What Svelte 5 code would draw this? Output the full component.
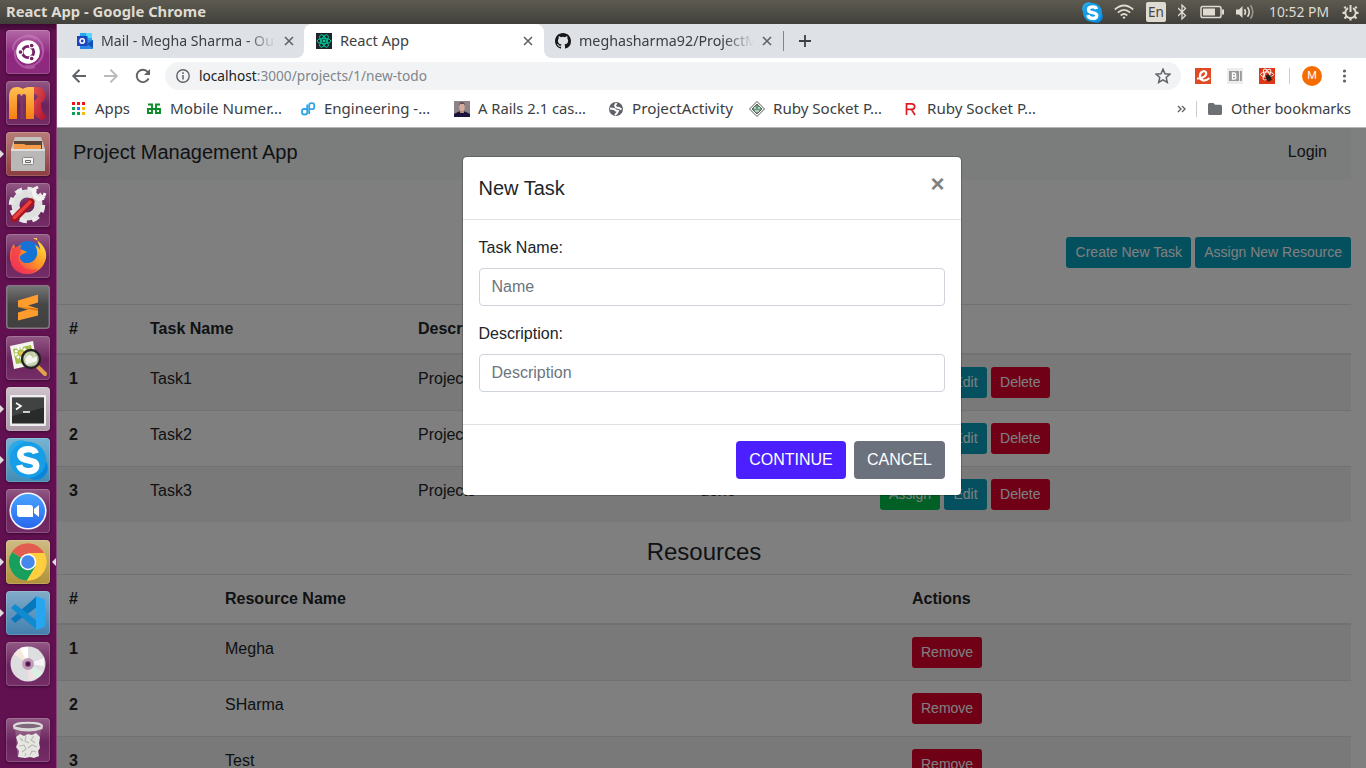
<script>
  const tasks = [
    { id: 1, name: 'Task1', description: 'Project1', status: 'done' },
    { id: 2, name: 'Task2', description: 'Project2', status: 'done' },
    { id: 3, name: 'Task3', description: 'Projects', status: 'done' }
  ];
  const resources = [
    { id: 1, name: 'Megha' },
    { id: 2, name: 'SHarma' },
    { id: 3, name: 'Test' }
  ];
  const bookmarks = [
    { icon: 'apps', text: 'Apps', w: 35 },
    { icon: 'geeks', text: 'Mobile Numer…', w: 112 },
    { icon: 'eng', text: 'Engineering -…', w: 106 },
    { icon: 'photo', text: 'A Rails 2.1 cas…', w: 108 },
    { icon: 'globe', text: 'ProjectActivity', w: 101 },
    { icon: 'gem', text: 'Ruby Socket P…', w: 109 },
    { icon: 'r', text: 'Ruby Socket P…', w: 109 }
  ];
  const launchers = [
    { icon: 'dash' }, { icon: 'rubymine' }, { icon: 'files', run: true }, { icon: 'settings' },
    { icon: 'firefox' }, { icon: 'sublime' }, { icon: 'viewer' }, { icon: 'terminal', run: true },
    { icon: 'skype', run: true }, { icon: 'zoom' }, { icon: 'chrome', run: true, active: true },
    { icon: 'vscode', run: true }, { icon: 'disc' }, { icon: 'trash' }
  ];
</script>

{#snippet label(text, w, color = '#3c4043', weight = 400)}
  <svg class="label" width={w} height="20"><text x="0" y="15" textLength={w} lengthAdjust="spacingAndGlyphs" fill={color} font-weight={weight}>{text}</text></svg>
{/snippet}

{#snippet skype(size)}
  <svg width={size} height={size} viewBox="0 0 40 40">
    <circle cx="13.500" cy="13.500" r="11.500" fill="#29a9ea" /><circle cx="27" cy="27" r="11" fill="#0b84dc" /><circle cx="20" cy="20" r="16.500" fill="#169ee6" />
    <path d="M27 14C25.500 8.500 13 9 13 15c0 7.500 14.500 3 14.500 10.200 0 7-14 6.500-15.500-.5" fill="none" stroke="#fff" stroke-width="5.800" stroke-linecap="butt" />
  </svg>
{/snippet}

{#snippet cross()}
  <svg width="10" height="10" viewBox="0 0 10 10"><path d="M1 1l8 8M9 1l-8 8" stroke="#5f6368" stroke-width="1.600" /></svg>
{/snippet}

<div class="screen">
  <header class="panel">
    <div class="title">{@render label('React App - Google Chrome', 200, '#dfdbd2', 700)}</div>
    <div class="tray-skype">{@render skype(23)}</div>
    <svg width="20" height="16" viewBox="0 0 20 16" fill="none" stroke="#dfdbd2" stroke-width="1.700"><path d="M.8 5.500Q10-2.500 19.200 5.500M3.800 8.600Q10 3 16.200 8.600M6.700 11.500Q10 8.500 13.300 11.500" /><circle cx="10" cy="13.600" r="1.200" fill="#dfdbd2" stroke="none" /></svg>
    <span class="lang">En</span>
    <svg width="10" height="18" viewBox="0 0 10 18" fill="none" stroke="#dfdbd2" stroke-width="1.300"><path d="M0 5l7.500 7.500L4 16V2l3.500 3.500L0 13" /></svg>
    <svg width="24" height="14" viewBox="0 0 24 14"><rect x="1" y="1.500" width="20" height="11" rx="1.800" fill="none" stroke="#dfdbd2" stroke-width="1.500" /><path d="M3 3.500h12v7H3zM22 4.500h2v5h-2z" fill="#dfdbd2" /></svg>
    <svg width="20" height="16" viewBox="0 0 20 16"><path d="M0 5.500h3l3.500-3.500v12L3 10.500H0z" fill="#dfdbd2" /><path d="M8.500 5.200q2 2.800 0 5.600M11.500 3.200q3.600 4.800 0 9.600" fill="none" stroke="#dfdbd2" stroke-width="1.600" /><path d="M14.500 1.200q4.600 6.800 0 13.600" fill="none" stroke="#99968c" stroke-width="1.600" /></svg>
    {@render label('10:52 PM', 60, '#dfdbd2')}
    <svg width="17" height="17" viewBox="0 0 17 17" fill="none" stroke="#dfdbd2"><path d="M6 4.200a5.200 5.200 0 1 0 5 0" stroke-width="1.900" /><path d="M8.500 1v7" stroke-width="2" /><path d="M3.800 4.200L2.300 2.700M13.200 4.200l1.500-1.500M3 8.800H.5M14 8.800h2.500M4.500 12.500l-2 2M12.500 12.500l2 2M8.500 14v2.500" stroke-width="2.200" /></svg>
  </header>

  <div class="desktop">
    <nav class="launcher">
      {#each launchers as item}
        <div class="tile {item.icon}">
          {#if item.run}<i class="run"></i>{/if}
          {#if item.active}<i class="run active"></i>{/if}
          {#if item.icon === 'skype'}
            {@render skype(44)}
          {:else}
            <svg width="44" height="44" viewBox="0 0 44 44">
              {#if item.icon === 'dash'}
                <path d="M7 20C7 9 19 3 30 9M17 7c11-5 22 5 20 17M36 17c4 11-6 21-17 19M29 37C18 41 7 32 9 20" fill="none" stroke="#d28bc5" stroke-width="2" opacity=".45" />
                <circle cx="22" cy="22" r="11.800" fill="#fff" /><circle cx="22" cy="22" r="5.700" fill="none" stroke="#772065" stroke-width="2.800" />
                <g fill="#772065" stroke="#fff" stroke-width="1.100"><circle cx="14.500" cy="22" r="2.400" /><circle cx="25.700" cy="15.500" r="2.400" /><circle cx="25.700" cy="28.500" r="2.400" /></g>
              {:else if item.icon === 'rubymine'}
                <defs><linearGradient id="mg" x2="0" y2="1"><stop stop-color="#ffbf54" /><stop offset="1" stop-color="#f57f10" /></linearGradient><linearGradient id="rg" x2="1" y2="1"><stop stop-color="#e0564f" /><stop offset="1" stop-color="#b20f30" /></linearGradient></defs>
                <path d="M28 6h4c9 1 9 13 3 16 0 7 2 11 6 14l-5 3c-7-2-10-9-11-17l5-4c3-2 1-5-2-5z" fill="url(#rg)" />
                <path d="M3 38V16C3 9 6 6 11 6c3 0 5 1 6 2 1-1 3-2 6-2h5v32h-8V15q0-2-2-2t-2 2v23h-1V15q0-2-2-2t-2 2v23z" fill="url(#mg)" />
                <path d="M14 16q1.500-2.500 3.500 0v22h2V16h-1v22h-4z" fill="#7c3866" />
              {:else if item.icon === 'files'}
                <path d="M9 5h26l4 12H5z" fill="#c4c3c0" /><path d="M8 9h28v9H8z" fill="#5c4534" /><path d="M8 12h10l2 1h15v6H8z" fill="#f49a49" /><path d="M5 17h34v22H5z" fill="#b9b8b6" /><path d="M5 17h34v2H5z" fill="#ddd" /><rect x="16.500" y="25.500" width="11" height="7" rx="1" fill="#f4f4f2" stroke="#888" /><path d="M19.500 28.500h5v2h-5z" fill="none" stroke="#666" />
              {:else if item.icon === 'settings'}
                <circle cx="21" cy="22" r="11.500" fill="none" stroke="#dfdfdf" stroke-width="8" /><circle cx="21" cy="22" r="16" fill="none" stroke="#e9e9e9" stroke-width="4.500" stroke-dasharray="7.200 5.366" />
                <path d="M30 14l-5 5" stroke="#c6c6c6" stroke-width="5" /><path d="M8.500 35.500L25 19" stroke="#a9131b" stroke-width="7" stroke-linecap="round" /><path d="M8.500 34.500L24 19" stroke="#e8403f" stroke-width="3.500" stroke-linecap="round" /><path d="M29 6q-2 4 0 8 5 4 9-1" fill="none" stroke="#f3f3f3" stroke-width="4" /><path d="M28 6l4-2M38 13l1-3" stroke="#f3f3f3" stroke-width="3" />
              {:else if item.icon === 'firefox'}
                <defs><linearGradient id="fx" x1="1" x2="0" y2="1"><stop stop-color="#fff34c" /><stop offset=".45" stop-color="#ff9824" /><stop offset="1" stop-color="#e91e63" /></linearGradient></defs>
                <circle cx="22" cy="20" r="13" fill="#1473d5" /><path d="M27 4c10 5 14 12 13 20-2 10-10 16-19 16S3 32 4 22c0-5 1-8 4-12l1 4 6-3-1 4 7 3-6 3c-3 3 1 9 7 8 8-1 12-9 7-18 3 1 4 3 5 5 0-5-3-8-3-12z" fill="url(#fx)" /><path d="M6 14l-1 17q4 8 14 9 8 0 13-5-13 3-18-6-3-6 1-11l-1-6z" fill="#f33450" opacity=".7" />
              {:else if item.icon === 'sublime'}
                <path d="M12 15.500l20-6v8l-10 3 10 3v7l-20 5v-8l10-3-10-2.500z" fill="#ff9c2e" /><path d="M12 22l20 1.500v2.500l-10-2z" fill="#d97812" />
              {:else if item.icon === 'viewer'}
                <path d="M4 10l23-5 4 23-23 5z" fill="#f4f4ef" /><path d="M7 13l18-4 3 16-18 3z" fill="#a2bd48" /><circle cx="15" cy="17" r="5" fill="none" stroke="#fff" stroke-width="3" stroke-dasharray="2.200 1" /><circle cx="15" cy="17" r="2" fill="#efc240" /><path d="M31 30l8 8" stroke="#e0a349" stroke-width="4" stroke-linecap="round" /><circle cx="25" cy="23" r="9" fill="#c4cfae" opacity=".85" /><path d="M19 24q4-9 8-2l4-2v5l-10 3z" fill="#fff" opacity=".8" /><circle cx="25" cy="23" r="9" fill="none" stroke="#222" stroke-width="2.400" />
              {:else if item.icon === 'terminal'}
                <rect x="4" y="8" width="36" height="31" rx="1" fill="#eee" /><rect x="6" y="10.500" width="32" height="26" fill="#292b2b" /><path d="M6 10.500h32v10L6 29z" fill="#555757" opacity=".55" /><path d="M10 16l5 3-5 3.500M17 25h7" fill="none" stroke="#fff" stroke-width="1.600" />
              {:else if item.icon === 'zoom'}
                <defs><linearGradient id="zm" x2="0" y2="1"><stop stop-color="#4ba5ff" /><stop offset="1" stop-color="#2765ed" /></linearGradient></defs>
                <circle cx="22" cy="22" r="17.800" fill="url(#zm)" stroke="#f6f6ff" stroke-width="1.600" /><path d="M11 16h13q3 0 3 3v9H14q-3 0-3-3zM28 20l5-4v12l-5-4z" fill="#fff" />
              {:else if item.icon === 'chrome'}
                <circle cx="22" cy="22" r="18.500" fill="#ffcf40" /><path d="M22 22L6 12A18.500 18.500 0 0 1 38 13H22z" fill="#e25c4f" /><path d="M22 22L6 12a18.500 18.500 0 0 0 15 28.500L29 27z" fill="#17a05d" /><path d="M22 13h16a18.500 18.500 0 0 1-17 27.500L30 26z" fill="#ffcf40" /><circle cx="22" cy="22" r="8.300" fill="#fff" /><circle cx="22" cy="22" r="6.800" fill="#4788ee" />
              {:else if item.icon === 'vscode'}
                <path d="M5 28l4 4 22-16V5z" fill="#0878bc" /><path d="M5 17l4-4 22 17v9z" fill="#118bd0" /><path d="M30 5l9 3.500v27L30 39z" fill="#27a5ef" />
              {:else if item.icon === 'disc'}
                <circle cx="22" cy="22" r="17.500" fill="#dedee0" /><path d="M22 22L8 12a17 17 0 0 1 9-6z" fill="#f3eadd" /><path d="M22 22L14 6a17 17 0 0 1 8-1z" fill="#fff" /><path d="M22 22l15 8a17 17 0 0 1-8 7z" fill="#dcefe3" /><path d="M22 22l16-6v8z" fill="#f5f5f5" /><path d="M22 22l7 15-6 2z" fill="#f5dfe2" /><circle cx="22" cy="22" r="6" fill="#bf9dba" /><circle cx="22" cy="22" r="2.700" fill="#551047" stroke="#906088" />
              {:else}
                <path d="M9 9l2.500 30h21L35 9z" fill="#b79ab0" opacity=".35" /><path d="M10 19l4-3 4 2 4-2 4 1 4-2 4 4-1 6 1 5-2 3 1 5-5 2-4-1-5 1-7-1 1-6-3-4 2-4z" fill="#e6e6e2" /><path d="M14 20l3 3M20 18l-1 5 4 2M28 18l-3 4 4 3M13 28l5-1 2 4-4 3M22 30l4-3 5 2M24 37l2-4 4 1M19 38l1-3" fill="none" stroke="#b9b9b4" stroke-width="1.100" /><ellipse cx="22" cy="8" rx="14" ry="3.300" fill="#7f6679" stroke="#ddd" stroke-width="2" /><path d="M7.500 9q14 6 29 0v2q-14 5-29 0z" fill="#d8d8d5" />
              {/if}
            </svg>
          {/if}
        </div>
      {/each}
    </nav>

    <section class="browser">
      <div class="tabs">
        <div class="tab first">
          <svg width="16" height="16" viewBox="0 0 16 16"><path d="M3 0h12v9H3z" fill="#28a8ea" /><path d="M9 0h6v5H9z" fill="#50d9ff" /><path d="M3 7h13v9H3z" fill="#2b86e4" /><path d="M10 11l6-4v8z" fill="#174fae" /><rect y="3" width="10.500" height="10" fill="#1c45c2" /><circle cx="5.200" cy="8" r="2.200" fill="none" stroke="#fff" stroke-width="1.500" /></svg>
          <div class="fade">{@render label('Mail - Megha Sharma - Out', 178)}</div>
          {@render cross()}
        </div>
        <div class="tab current">
          <svg width="16" height="16" viewBox="0 0 16 16"><path d="M0 0h16v16H0z" fill="#20232a" /><g fill="none" stroke="#00c896" stroke-width="1"><ellipse cx="8" cy="8" rx="6.800" ry="2.700" /><ellipse cx="8" cy="8" rx="6.800" ry="2.700" transform="rotate(60 8 8)" /><ellipse cx="8" cy="8" rx="6.800" ry="2.700" transform="rotate(120 8 8)" /></g><circle cx="8" cy="8" r="1.400" fill="#00d8a0" /></svg>
          <div>{@render label('React App', 69)}</div>
          {@render cross()}
        </div>
        <div class="tab third">
          <svg width="16" height="16" viewBox="0 0 16 16"><path fill="#181717" d="M8 0C3.580 0 0 3.580 0 8c0 3.540 2.290 6.530 5.470 7.590.4.070.55-.17.55-.38 0-.19-.01-.82-.01-1.490-2.010.37-2.530-.49-2.690-.94-.09-.23-.48-.94-.82-1.130-.28-.15-.68-.52-.01-.53.63-.01 1.080.58 1.230.82.72 1.210 1.870.87 2.330.66.070-.52.28-.87.51-1.070-1.780-.2-3.640-.89-3.640-3.950 0-.87.31-1.590.82-2.150-.08-.2-.36-1.020.08-2.120 0 0 .67-.21 2.200.82a7.600 7.600 0 0 1 4 0c1.530-1.040 2.200-.82 2.200-.82.44 1.100.16 1.920.08 2.120.51.56.82 1.270.82 2.150 0 3.070-1.870 3.750-3.650 3.950.29.25.54.73.54 1.480 0 1.070-.01 1.930-.01 2.200 0 .21.15.46.55.38A8 8 0 0 0 16 8c0-4.420-3.580-8-8-8z" /></svg>
          <div class="fade">{@render label('meghasharma92/ProjectM', 179)}</div>
          {@render cross()}
        </div>
        <div class="newtab"><svg width="12" height="12" viewBox="0 0 12 12"><path d="M6 0v12M0 6h12" stroke="#3c4043" stroke-width="1.800" /></svg></div>
      </div>

      <div class="toolbar">
        <svg width="16" height="16" viewBox="0 0 16 16"><path d="M15 8H2.500M8.500 1.800L2.200 8l6.300 6.200" fill="none" stroke="#5f6368" stroke-width="1.900" /></svg>
        <svg width="16" height="16" viewBox="0 0 16 16"><path d="M1 8h12.500M7.500 1.800L13.800 8l-6.300 6.200" fill="none" stroke="#b9bbbd" stroke-width="1.900" /></svg>
        <svg width="16" height="16" viewBox="0 0 16 16"><path d="M13.600 10.500A6.200 6.200 0 1 1 12.800 4" fill="none" stroke="#5f6368" stroke-width="1.900" /><path d="M15 1v6H9z" fill="#5f6368" /></svg>
        <div class="omnibox">
          <svg width="14" height="14" viewBox="0 0 14 14"><circle cx="7" cy="7" r="6.200" fill="none" stroke="#5f6368" stroke-width="1.400" /><path d="M7 6v4.500M7 3.300v1.600" stroke="#5f6368" stroke-width="1.500" /></svg>
          <svg class="label url" width="228" height="20"><text x="0" y="15" textLength="228" lengthAdjust="spacingAndGlyphs" fill="#80868b"><tspan fill="#202124">localhost</tspan>:3000/projects/1/new-todo</text></svg>
          <svg class="star" width="16" height="16" viewBox="0 0 14 14"><path d="M7 1l1.700 4 4.400.4-3.300 2.900 1 4.300L7 10.300l-3.800 2.300 1-4.300L.9 5.400 5.300 5z" fill="none" stroke="#5f6368" stroke-width="1.300" /></svg>
        </div>
        <svg width="16" height="16" viewBox="0 0 16 16"><path d="M0 0h16v16H0z" fill="#df4a24" /><path d="M2 10.500h2C9 10 12 7 11 4.500S5 3 5 8s5 6 9.500 2" fill="none" stroke="#fff" stroke-width="2.200" /></svg>
        <svg width="16" height="16" viewBox="0 0 16 16"><path d="M0 0h16v16H0z" fill="#ededed" /><path d="M2 3h10v10H2zM13 3h1.800v10H13z" fill="#9a9a9a" /><path d="M5.500 5v6h2q1.500 0 1.500-1.500T7.500 8H6h1.300q1.400 0 1.400-1.500T7.300 5z" fill="none" stroke="#fff" stroke-width="1.300" /></svg>
        <svg width="16" height="16" viewBox="0 0 16 16"><path d="M0 0h16v16H0z" fill="#dd3918" /><g fill="none" stroke="#fff" stroke-width=".9"><ellipse cx="8" cy="6.500" rx="6.500" ry="2.500" /><ellipse cx="8" cy="6.500" rx="6" ry="2.500" transform="rotate(60 8 6.500)" /><ellipse cx="8" cy="6.500" rx="6" ry="2.500" transform="rotate(120 8 6.500)" /></g><ellipse cx="9.500" cy="10" rx="2.500" ry="3.500" fill="#2a1b16" transform="rotate(-30 9.500 10)" /><path d="M6 8l7 4M5.500 11l8-2M8 14l4-7" stroke="#2a1b16" stroke-width=".7" /></svg>
        <i class="sep"></i>
        <span class="avatar">M</span>
        <svg width="14" height="16" viewBox="0 0 14 16" fill="#5f6368"><circle cx="6.500" cy="3" r="1.600" /><circle cx="6.500" cy="8" r="1.600" /><circle cx="6.500" cy="13" r="1.600" /></svg>
      </div>

      <div class="bookmarks">
        {#each bookmarks as b}
          <div class="bookmark">
            <svg width="16" height="16" viewBox="0 0 16 16">
              {#if b.icon === 'apps'}
                <path d="M1 1h3v3H1zM6 1h3v3H6zM11 1h3v3h-3z" fill="#f01414" /><path d="M1 6h3v3H1zM1 11h3v3H1zM6 11h3v3H6z" fill="#0fa055" /><path d="M6 6h3v3H6z" fill="#3b68f7" /><path d="M11 6h3v3h-3zM11 11h3v3h-3z" fill="#f7b916" />
              {:else if b.icon === 'geeks'}
                <path d="M2 3.500h4v8.500H2V8h12v4h-4V3.500h4" fill="none" stroke="#0b8c27" stroke-width="1.900" />
              {:else if b.icon === 'eng'}
                <path d="M7.200 3.500v8q0 2-2.200 2H4q-2 0-2-2v-1.500q0-2 2-2h3M9.200 13V4.200q0-2 2-2h1q2 0 2 2v2q0 2-2 2h-3" fill="none" stroke="#33a5e8" stroke-width="1.800" />
              {:else if b.icon === 'photo'}
                <path d="M0 0h16v16H0z" fill="#8d8488" /><path d="M0 16v-3l5-2.500h6l5 2.500v3z" fill="#17133a" /><path d="M6 8h4v4H6z" fill="#b58b7e" /><ellipse cx="8" cy="6" rx="2.800" ry="4" fill="#d4ab9c" /><path d="M5 5q0-4 3-4t3 4l-1-2H6z" fill="#65504a" />
              {:else if b.icon === 'globe'}
                <circle cx="8" cy="8" r="7" fill="#5f6368" /><path d="M8.500 2L7 4.500l1 2 3 .5 2.500 1.500M2 7.500l4 .5 2 1.500 2 .5-1 2-2 2" fill="none" stroke="#fff" stroke-width="1.900" />
              {:else if b.icon === 'gem'}
                <path d="M8 .5L15.500 8 8 15.500.5 8z" fill="#fff" stroke="#555" /><path d="M8 3l5 5-5 5-5-5z" fill="#649b7b" stroke="#444" stroke-width=".8" /><path d="M5 7h2M9 7h2M6 10h4" stroke="#fff" stroke-width="1.200" />
              {:else}
                <path d="M3.500 14V2.800h5q3.200 0 3.200 2.800t-3.200 2.800h-5M8.500 8.500l3.500 5.500" fill="none" stroke="#df1b22" stroke-width="1.700" />
              {/if}
            </svg>
            {@render label(b.text, b.w)}
          </div>
        {/each}
        <svg width="10" height="10" viewBox="0 0 10 10"><path d="M1 2l3 3-3 3M5 2l3 3-3 3" fill="none" stroke="#5f6368" stroke-width="1.400" /></svg>
        <i class="sep"></i>
        <div class="bookmark">
          <svg width="16" height="16" viewBox="0 0 16 16"><path d="M1 3.500q0-1.500 1.500-1.500h4L8 3.700h5.500q1.500 0 1.500 1.500v7.300q0 1.500-1.500 1.500h-11Q1 14 1 12.500z" fill="#6d7175" /></svg>
          {@render label('Other bookmarks', 120)}
        </div>
      </div>

      <main class="viewport">
        <div class="page">
          <div class="navbar"><span class="brand">Project Management App</span><span>Login</span></div>
          <div class="actions"><button class="btn info create">Create New Task</button><button class="btn info">Assign New Resource</button></div>

          <div class="table tasks">
            <div class="row head"><b>#</b><b>Task Name</b><b>Description</b><b>Status</b><b></b></div>
            {#each tasks as t}
              <div class="row">
                <b>{t.id}</b><span>{t.name}</span><span>{t.description}</span><span>{t.status}</span>
                <span class="buttons"><button class="btn success">Assign</button><button class="btn info edit">Edit</button><button class="btn danger">Delete</button></span>
              </div>
            {/each}
          </div>

          <h4>Resources</h4>
          <div class="table resources">
            <div class="row head"><b>#</b><b>Resource Name</b><b>Actions</b></div>
            {#each resources as r}
              <div class="row"><b>{r.id}</b><span>{r.name}</span><span class="buttons"><button class="btn danger">Remove</button></span></div>
            {/each}
          </div>
        </div>

        <div class="backdrop">
          <div class="modal">
            <div class="modal-header"><h5>New Task</h5><span class="close">×</span></div>
            <div class="modal-body">
              <label for="name">Task Name:</label>
              <input id="name" placeholder="Name" />
              <label for="description">Description:</label>
              <input id="description" placeholder="Description" />
            </div>
            <div class="modal-footer"><button class="continue">CONTINUE</button><button class="cancel">CANCEL</button></div>
          </div>
        </div>
      </main>
    </section>
  </div>
</div>

<style>
  :global(body) { margin: 0; overflow: hidden; }
  * { box-sizing: border-box; }
  svg { display: block; flex: none; }
  button { border: 1px solid transparent; margin: 0; font-family: inherit; }
  .screen { width: 1366px; height: 768px; display: flex; flex-direction: column; overflow: hidden; font-family: "Liberation Sans", Arial, sans-serif; }
  .label { font-family: "Noto Sans", "Open Sans", sans-serif; font-size: 14.5px; overflow: visible; }

  .panel { height: 24px; flex: none; display: grid; grid-template-columns: 1fr 32px 32px 32px 22px 36px 33px 73px 24px; align-items: center; background: linear-gradient(#5d5b50, #403f3a); }
  .title { padding-left: 6px; }
  .tray-skype { margin-left: -1px; }
  .lang { width: 20px; height: 20px; border-radius: 2px; background: #dfdbd2; color: #46443e; font: 13.5px/20px "Noto Sans", sans-serif; text-align: center; }

  .desktop { display: flex; flex: 1; min-height: 0; }
  .launcher { width: 57px; flex: none; padding: 6px 0 0 6px; display: flex; flex-direction: column; gap: 7px; background: linear-gradient(#3c0831, #611050 8px); border-right: 1px solid #87477a; }
  .tile { position: relative; width: 44px; height: 44px; flex: none; border-radius: 4px; display: flex; align-items: center; justify-content: center; background: linear-gradient(#925985, #6a235d 55%, #752d67); box-shadow: inset 0 0 0 1px rgba(255,255,255,.17), 0 1px 3px rgba(0,0,0,.4); }
  .tile.dash { background: linear-gradient(#b36aa6, #8f2781 55%, #8c2b7c); }
  .tile.files { background: linear-gradient(#b77d79, #8c3c3f); }
  .tile.sublime { background: linear-gradient(#777, #464646 45%, #404040); box-shadow: inset 0 0 0 1.5px #877784; }
  .tile.terminal { background: linear-gradient(#cec2cb, #aa9ba6); }
  .tile.skype { background: linear-gradient(#78b4d3, #438cb4); }
  .tile.chrome { background: linear-gradient(#cfbb84, #b19239); }
  .tile.vscode { background: linear-gradient(#83abc9, #427fae); }
  .tile.trash { margin-top: 25px; }
  .run { position: absolute; left: -6px; top: 18px; border: 4px solid transparent; border-left-color: #e1dce0; border-right: 0; }
  .run.active { left: 46px; border: 4px solid transparent; border-right-color: #e1dce0; border-left: 0; }

  .browser { flex: 1; min-width: 0; display: flex; flex-direction: column; background: #fff; }
  .tabs { height: 34px; flex: none; display: grid; grid-template-columns: 247px 240px 239px 1fr; background: linear-gradient(#dee1e6 50%, #fff 50%); }
  .tab { display: grid; grid-template-columns: 24px 1fr 10px; align-items: center; background: #dee1e6; }
  .first { padding: 0 10px 0 20px; border-bottom-right-radius: 8px; }
  .current { padding: 0 11px 0 12px; background: #fff; border-radius: 8px 8px 0 0; }
  .third { padding: 0 11px 0 11px; border-bottom-left-radius: 8px; }
  .fade { width: 175px; overflow: hidden; mask-image: linear-gradient(90deg, #000 145px, transparent 175px); }
  .newtab { display: flex; align-items: center; padding-left: 16px; background: linear-gradient(#80858b, #80858b) 0 50% / 1px 20px no-repeat #dee1e6; }
  .toolbar { height: 36px; flex: none; display: grid; grid-template-columns: 32px 32px 30px 1030px 32px 32px 30px 13px 36px 1fr; align-items: center; padding-left: 14px; }
  .omnibox { width: 1016px; height: 28px; border-radius: 14px; background: #f1f3f4; display: grid; grid-template-columns: 23px 1fr 26px; align-items: center; padding-left: 11px; }
  .sep { width: 1px; height: 16px; background: #c9cbce; }
  .avatar { width: 20px; height: 20px; border-radius: 50%; background: #f56c00; color: #fff; font: 11px/20px Roboto, sans-serif; text-align: center; }
  .bookmarks { height: 34px; flex: none; display: grid; grid-template-columns: 75px 154px 154px 154px 141px 154px 274px 19px 11px 1fr; align-items: center; padding: 0 0 4px 14px; border-bottom: 1px solid #b5b6b7; }
  .bookmark { display: flex; gap: 8px; align-items: center; }

  .viewport { position: relative; flex: 1; min-height: 0; overflow: hidden; color: #212529; font-size: 16px; line-height: 24px; }
  .page { width: 1294px; }
  .navbar { height: 52px; padding: 0 24px 4px 16px; display: flex; justify-content: space-between; align-items: center; background: #f6fafa; }
  .brand { font-size: 20px; }
  .actions { display: flex; justify-content: flex-end; gap: 4px; padding: 57px 0 36px; }
  .btn { height: 31px; padding: 0 8px; border-radius: 3px; color: #fff; font-size: 14px; line-height: 21px; }
  .create { width: 125px; }
  .edit { width: 43px; }
  .info { background: #0aa0be; }
  .success { background: #00c04c; }
  .danger { background: #e0002c; }
  .row { display: grid; align-items: start; height: 56px; border-top: 1px solid #dee2e6; }
  .row > * { padding: 12px 12px 0; }
  .tasks .row { grid-template-columns: 81px 268px 282px 180px 1fr; }
  .resources .row { grid-template-columns: 156px 687px 1fr; }
  .row.head { height: 51px; border-bottom: 2px solid #dee2e6; }
  .row:nth-child(even) { background: #f2f2f2; }
  .row.head + .row { height: 55px; border-top: 0; }
  .buttons { display: flex; gap: 4px; }
  h4 { margin: 0; height: 52px; padding-top: 15px; text-align: center; font-size: 24px; line-height: 29px; font-weight: 400; }

  .backdrop { position: absolute; inset: 0; background: rgba(0,0,0,.5); }
  .modal { width: 500px; margin: 28px 0 0 405px; background: #fff; background-clip: padding-box; border: 1px solid rgba(0,0,0,.2); border-radius: 5px; }
  .modal-header { height: 63px; padding: 16px 16.5px 16px 15.5px; display: flex; justify-content: space-between; border-bottom: 1px solid #dee2e6; }
  h5 { margin: 0; font-size: 20px; line-height: 30px; font-weight: 400; }
  .close { font-size: 24px; line-height: 22px; font-weight: 700; color: #808080; }
  .modal-body { padding: 16px; }
  .modal-body label { display: block; margin: 0 0 8px -.5px; }
  input { display: block; width: 100%; height: 38px; margin-bottom: 16px; padding: 6px 11.5px; border: 1px solid #ced4da; border-radius: 4px; background: #fff; font: 16px "Liberation Sans", Arial, sans-serif; }
  input::placeholder { color: #6c757d; opacity: 1; }
  .modal-footer { display: flex; justify-content: flex-end; gap: 8px; padding: 16px; border-top: 1px solid #dee2e6; }
  .modal-footer button { height: 38px; padding: 0; border-radius: 4px; color: #fff; font-size: 16px; }
  .modal-footer .continue { width: 110px; background: #4b1fff; }
  .modal-footer .cancel { width: 91px; background: #6b727e; }
</style>
